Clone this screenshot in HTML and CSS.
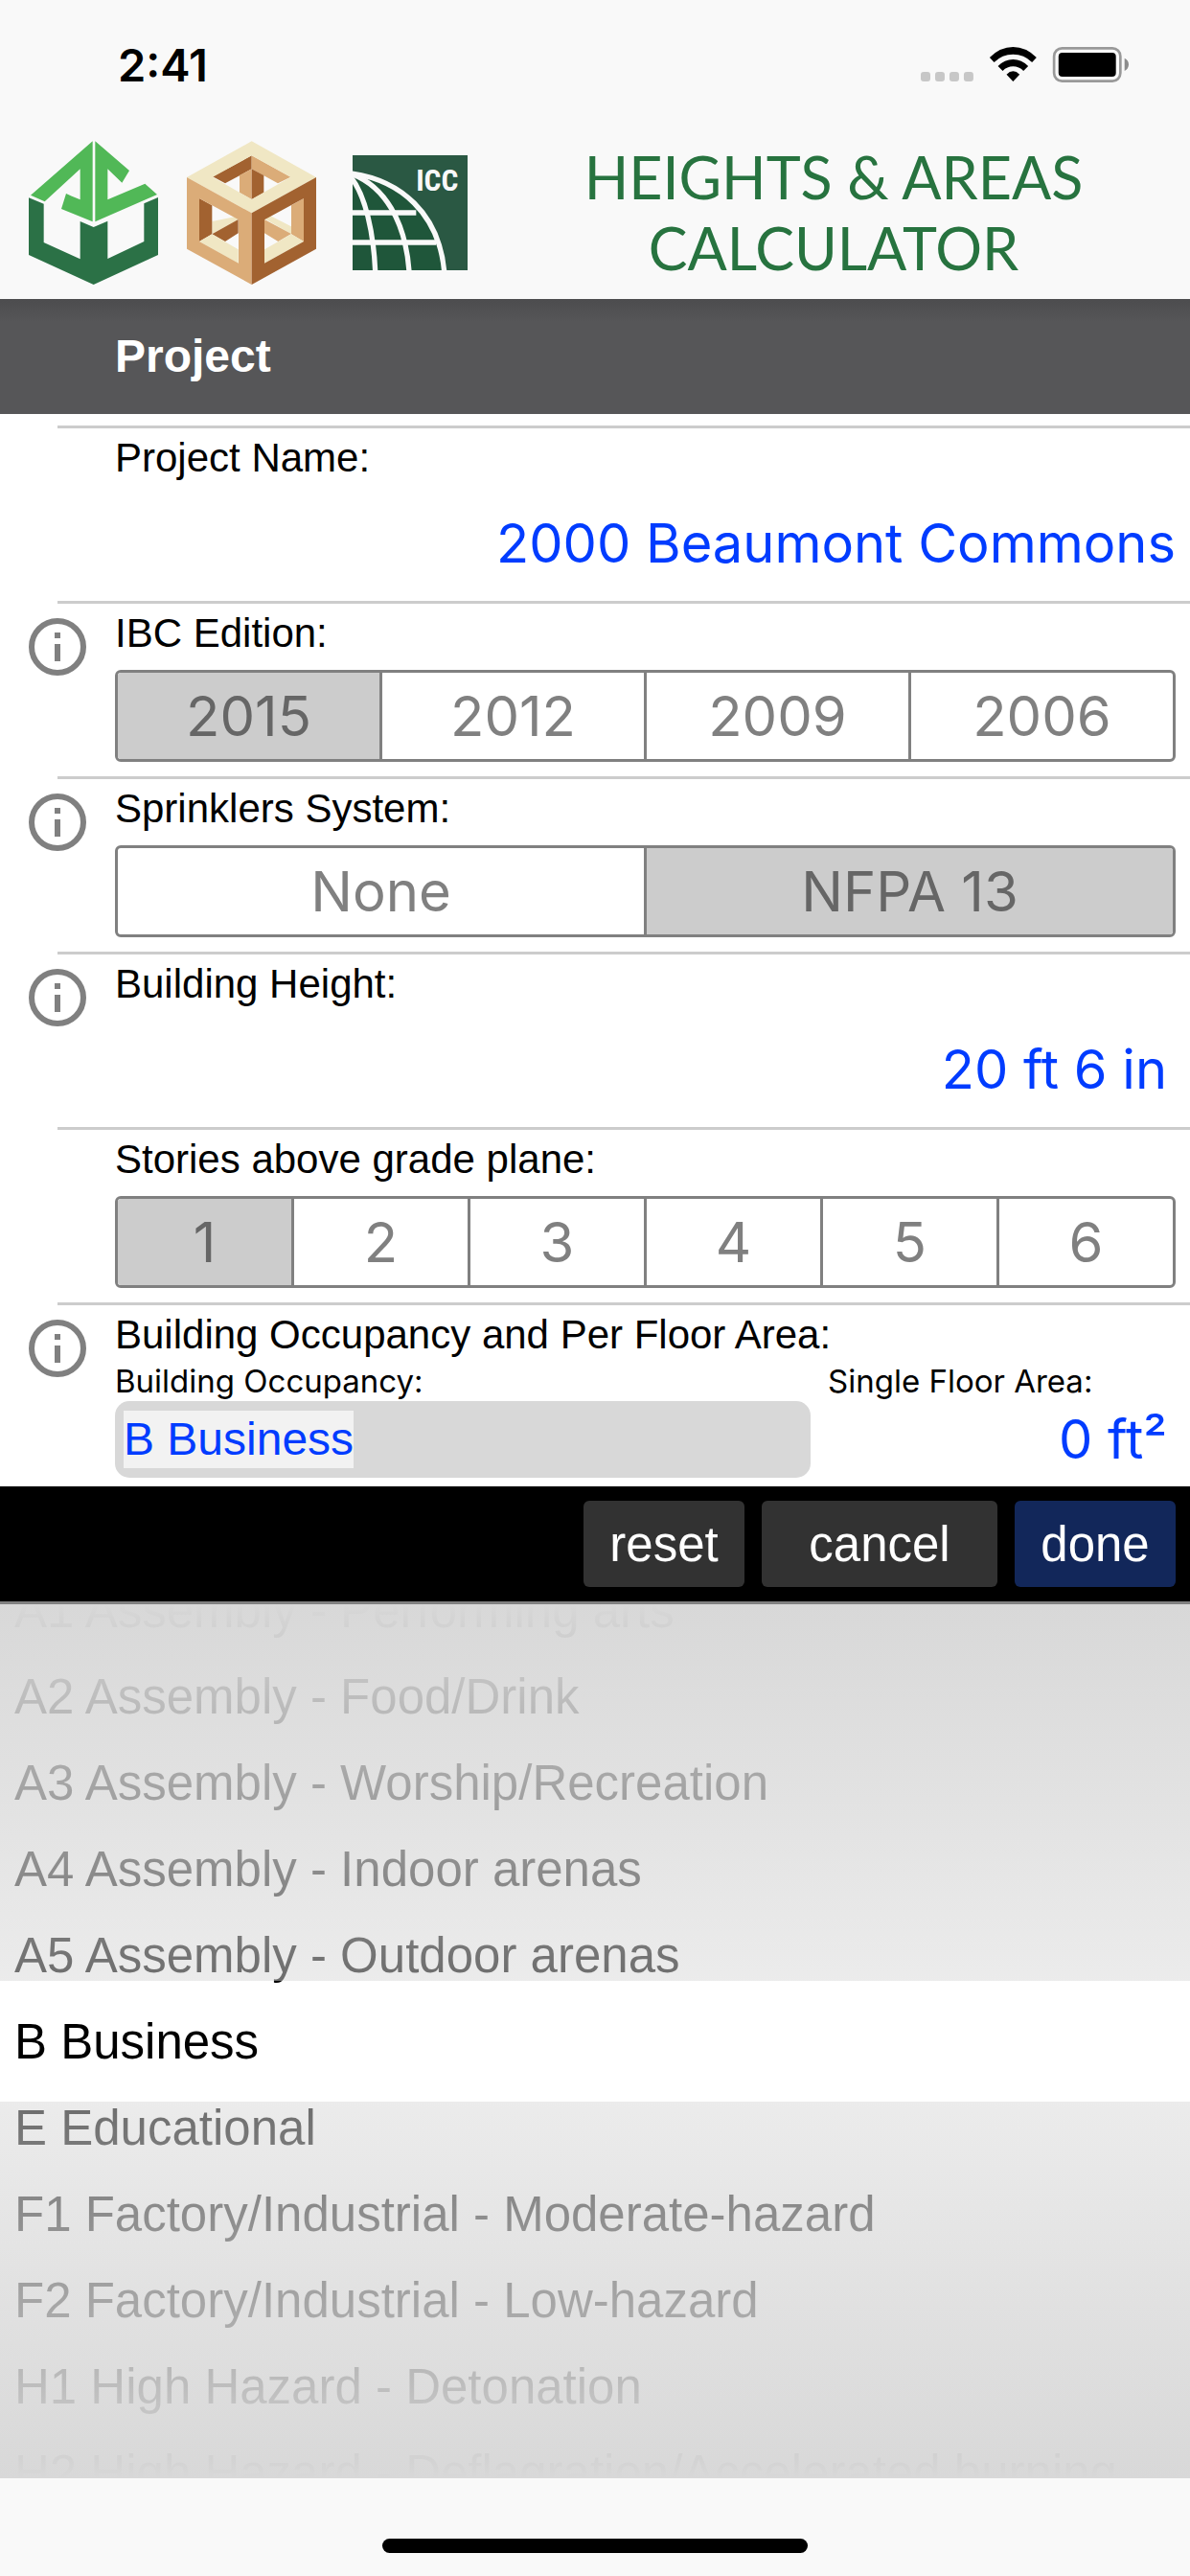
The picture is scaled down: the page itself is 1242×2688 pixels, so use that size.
FILE: index.html
```html
<!DOCTYPE html>
<html lang="en">
<head>
<meta charset="utf-8">
<meta name="viewport" content="width=device-width, initial-scale=1">
<title>Heights &amp; Areas Calculator</title>
<link rel="stylesheet" href="styles.css">
</head>
<body>
<svg class="sprite" aria-hidden="true">
  <symbol id="info" viewBox="0 0 60 60">
    <circle cx="30" cy="30" r="27" fill="none" stroke="#808080" stroke-width="6"/>
    <path d="M27 15h6v6h-6zM27 27h6v18h-6z" fill="#808080"/>
  </symbol>
</svg>

<header class="top">
  <div class="status">
    <time class="clock">2:41</time>
    <svg class="status-icons" viewBox="60 57 652 111" role="img" aria-label="No signal, Wi-Fi on, battery full">
      <g fill="#c7c7c7">
        <rect x="60" y="135" width="30" height="30" rx="9"/>
        <rect x="105" y="135" width="30" height="30" rx="9"/>
        <rect x="150" y="135" width="30" height="30" rx="9"/>
        <rect x="195" y="135" width="30" height="30" rx="9"/>
      </g>
      <path d="M276 90Q309 57 349.500 57T423 90L409 105Q384 80 349.500 80T290 105Z"/>
      <path d="M302 117Q323 96 349.500 96T397 117L382 132Q368 118 349.500 118T317 132Z"/>
      <path d="M329 143Q339 133 349.500 133T370 143L349.500 165Z"/>
      <rect x="478" y="61" width="208" height="103" rx="25" fill="none" stroke="#999" stroke-width="8"/>
      <rect x="492" y="75" width="180" height="75" rx="12"/>
      <path d="M699 92Q712 98 712 112T699 132Z" fill="#8c8c8c"/>
    </svg>
  </div>
  <div class="brand">
    <svg class="logo-cube" viewBox="30 20 405 450" role="img" aria-label="AWC logo">
      <g fill="#51b857">
        <path d="M230 21V273L132 233L147 185L165 193L191 204V108L80 210L36 190Z"/>
        <path d="M238 21L345 113L322 151L277 108V204L394 154L432 188L238 273Z"/>
      </g>
      <path fill="#2b7146" d="M30 198L77 217V338L191 390V272L233 290L277 271V389L391 335V216L435 197V377L233 470L30 377Z"/>
    </svg>
    <svg class="logo-cube" viewBox="30 20 405 450" role="img" aria-label="Wood cube logo">
      <path fill="#f9f9f9" d="M150 150L195 125V182ZM272 128L315 152L272 180Z"/>
      <path fill="#a26230" d="M233 66V108L150 153L111 132Z"/>
      <path fill="#dbac78" d="M233 66L355 133L315 153L233 108ZM195 128L233 108V203L195 182Z"/>
      <path fill="#a26230" d="M233 108L271 128V182L233 203Z"/>
      <path fill="#f0e7c4" d="M109 270L165 240L191 267L109 312ZM276 265L292 250L358 288V312Z"/>
      <path fill="#f9f9f9" d="M109 220L180 258L109 272ZM357 220V288L286 252Z"/>
      <path fill="#a26230" d="M69 200L109 222V312L69 335ZM109 312L191 266V309L150 335Z"/>
      <path fill="#dbac78" d="M396 200V335L357 312V222ZM273 266L357 311L316 335L273 309Z"/>
      <path fill="#f0e7c4" d="M69 335L109 312L191 360V403ZM396 335L357 312L273 360V403Z"/>
      <path fill="#f0e7c4" fill-rule="evenodd" d="M233 21L435 134L233 246L30 134ZM233 66L111 133L233 203L355 133Z"/>
      <path fill="#dbac78" fill-rule="evenodd" d="M30 134L233 246V470L30 358ZM69 200V335L192 403V267Z"/>
      <path fill="#a26230" fill-rule="evenodd" d="M435 134L233 246V470L435 358ZM396 200L273 267V403L396 335Z"/>
    </svg>
    <svg class="logo-icc" viewBox="39 36 360 360" role="img" aria-label="ICC logo">
      <defs><clipPath id="frame"><path d="M39 36h360v360H39z"/></clipPath></defs>
      <path fill="#2a5843" d="M39 36h360v360H39z"/>
      <g clip-path="url(#frame)">
        <path fill="#1f563a" d="M39 92C190 118 310 220 326 396H39Z"/>
        <g fill="none" stroke="#f9f9f9" stroke-width="16">
          <path d="M30 92C190 112 310 220 326 400"/>
          <path d="M30 92C140 130 205 245 216 400"/>
          <path d="M30 100C80 160 105 280 110 400"/>
          <path d="M39 216H238M39 309H300"/>
        </g>
      </g>
      <text class="icc-text" x="370" y="148" text-anchor="end">ICC</text>
    </svg>
    <h1 class="title">HEIGHTS &amp; AREAS<br>CALCULATOR</h1>
  </div>
</header>

<main>
  <h2 class="section">Project</h2>
  <form class="form">
    <div class="row">
      <div class="body">
        <label class="label" for="name">Project Name:</label>
        <input class="value value-name" id="name" type="text" value="2000 Beaumont Commons">
      </div>
    </div>
    <div class="row">
      <button class="info" type="button" aria-label="About IBC edition"><svg><use href="#info"/></svg></button>
      <fieldset class="body">
        <legend class="label">IBC Edition:</legend>
        <div class="segments">
          <label class="segment"><input type="radio" name="ibc" checked>2015</label>
          <label class="segment"><input type="radio" name="ibc">2012</label>
          <label class="segment"><input type="radio" name="ibc">2009</label>
          <label class="segment"><input type="radio" name="ibc">2006</label>
        </div>
      </fieldset>
    </div>
    <div class="row">
      <button class="info" type="button" aria-label="About sprinklers"><svg><use href="#info"/></svg></button>
      <fieldset class="body">
        <legend class="label">Sprinklers System:</legend>
        <div class="segments">
          <label class="segment"><input type="radio" name="sprinklers">None</label>
          <label class="segment"><input type="radio" name="sprinklers" checked>NFPA 13</label>
        </div>
      </fieldset>
    </div>
    <div class="row">
      <button class="info" type="button" aria-label="About building height"><svg><use href="#info"/></svg></button>
      <div class="body">
        <label class="label" for="height">Building Height:</label>
        <input class="value" id="height" type="text" value="20 ft 6 in">
      </div>
    </div>
    <div class="row">
      <fieldset class="body">
        <legend class="label">Stories above grade plane:</legend>
        <div class="segments">
          <label class="segment"><input type="radio" name="stories" checked>1</label>
          <label class="segment"><input type="radio" name="stories">2</label>
          <label class="segment"><input type="radio" name="stories">3</label>
          <label class="segment"><input type="radio" name="stories">4</label>
          <label class="segment"><input type="radio" name="stories">5</label>
          <label class="segment"><input type="radio" name="stories">6</label>
        </div>
      </fieldset>
    </div>
    <div class="row">
      <button class="info" type="button" aria-label="About occupancy and area"><svg><use href="#info"/></svg></button>
      <div class="body">
        <h3 class="label">Building Occupancy and Per Floor Area:</h3>
        <div class="pair">
          <div class="field">
            <label class="sublabel" for="occupancy">Building Occupancy:</label>
            <button class="occupancy" id="occupancy" type="button"><mark>B Business</mark></button>
          </div>
          <div class="field">
            <label class="sublabel" for="area">Single Floor Area:</label>
            <input class="value value-area" id="area" type="text" value="0 ft²">
          </div>
        </div>
      </div>
    </div>
  </form>
</main>

<section class="sheet" aria-label="Choose occupancy">
  <div class="toolbar">
    <button class="tool" type="button">reset</button>
    <button class="tool tool-wide" type="button">cancel</button>
    <button class="tool tool-done" type="button">done</button>
  </div>
  <div class="picker">
    <div class="wheel">
      <label class="option"><input type="radio" name="occ">A1 Assembly - Performing arts</label>
      <label class="option"><input type="radio" name="occ">A2 Assembly - Food/Drink</label>
      <label class="option"><input type="radio" name="occ">A3 Assembly - Worship/Recreation</label>
      <label class="option"><input type="radio" name="occ">A4 Assembly - Indoor arenas</label>
      <label class="option"><input type="radio" name="occ">A5 Assembly - Outdoor arenas</label>
      <label class="option"><input type="radio" name="occ" checked>B Business</label>
      <label class="option"><input type="radio" name="occ">E Educational</label>
      <label class="option"><input type="radio" name="occ">F1 Factory/Industrial - Moderate-hazard</label>
      <label class="option"><input type="radio" name="occ">F2 Factory/Industrial - Low-hazard</label>
      <label class="option"><input type="radio" name="occ">H1 High Hazard - Detonation</label>
      <label class="option"><input type="radio" name="occ">H2 High Hazard - Deflagration/Accelerated burning</label>
    </div>
  </div>
</section>

<footer class="home"><div class="home-bar"></div></footer>
</body>
</html>
```
FILE: styles.css
```css
* {
  box-sizing: border-box;
}

body {
  margin: 0;
  background: #f9f9f9;
  color: #000;
  font-family: "Liberation Sans", Arial, sans-serif;
}

button,
input {
  font: inherit;
  color: inherit;
  margin: 0;
  padding: 0;
  border: 0;
  background: none;
}

.sprite {
  display: none;
}

/* Header */
.status {
  display: flex;
  justify-content: space-between;
  align-items: center;
  height: 135px;
  padding: 0 64px 0 123px;
}

.clock {
  font: 600 47px/1 Inter, sans-serif;
}

.status-icons {
  width: 217px;
  height: 37px;
}

.brand {
  display: flex;
  align-items: center;
  padding: 12px 0 15px 30px;
}

.logo-cube {
  width: 135px;
  height: 150px;
  margin-right: 30px;
}

.logo-icc {
  width: 120px;
  height: 120px;
  margin: 0 10px 0 8px;
}

.icc-text {
  fill: #f9f9f9;
  font: bold 94px "Roboto Condensed", "Liberation Sans Narrow", "Liberation Sans", sans-serif;
}

.title {
  flex: 1;
  margin: 0;
  color: #27733f;
  font: 400 61px/74px Lato, "Gill Sans", sans-serif;
  text-align: center;
}

/* Project form */
.section {
  margin: 0;
  padding: 0 120px;
  background: linear-gradient(#4c4c4e, #565658 24px);
  color: #fff;
  font-size: 48px;
  line-height: 120px;
}

.form {
  padding-top: 12px;
  background: #fff;
}

.row {
  display: grid;
  grid-template-columns: 120px 1fr;
  min-height: 183px;
  padding: 3px 15px 0 0;
  background: linear-gradient(#ccc, #ccc) 60px 0 / 100% 3px no-repeat;
}

.info {
  width: 60px;
  height: 60px;
  margin: 15px 0 0 30px;
}

.info svg {
  display: block;
  width: 60px;
  height: 60px;
}

.body {
  grid-column: 2;
  min-width: 0;
  margin: 0;
  padding: 0;
  border: 0;
}

.label {
  display: block;
  margin: 0;
  padding: 0;
  font-size: 42px;
  font-weight: 400;
  line-height: 62px;
}

.value {
  display: block;
  width: 100%;
  height: 100px;
  margin-top: 8px;
  padding-right: 9px;
  color: #003cff;
  font: 56px/1 Inter, sans-serif;
  text-align: right;
}

.value-name {
  padding-right: 0;
}

.value-area {
  height: 80px;
  margin-top: 6px;
}

.segments {
  display: flex;
  height: 96px;
  margin-top: 7px;
  overflow: hidden;
  border: 3px solid #808080;
  border-radius: 6px;
}

.segment {
  flex: 1;
  color: #808080;
  font: 58px/90px Inter, sans-serif;
  text-align: center;
}

.segment + .segment {
  border-left: 3px solid #808080;
}

.segment:has(:checked) {
  background: #ccc;
  color: #666;
}

.segment input,
.option input {
  position: absolute;
  opacity: 0;
}

.pair {
  display: grid;
  grid-template-columns: 2fr 1fr;
  gap: 18px;
  padding: 2px 0 9px;
}

.field {
  min-width: 0;
}

.sublabel {
  display: block;
  font: 33px/30px Inter, sans-serif;
}

.occupancy {
  display: block;
  width: 100%;
  height: 80px;
  margin-top: 6px;
  padding: 0 9px;
  border-radius: 15px;
  background: #d8d8d8;
  font-size: 48px;
  text-align: left;
}

.occupancy mark {
  display: inline-block;
  background: #f2f2f2;
  color: #003cff;
  line-height: 60px;
}

/* Picker sheet */
.toolbar {
  display: flex;
  justify-content: flex-end;
  gap: 18px;
  padding: 15px;
  background: #000;
}

.tool {
  width: 168px;
  height: 90px;
  border-radius: 6px;
  background: #323232;
  color: #fff;
  font-size: 51px;
}

.tool-wide {
  width: 246px;
}

.tool-done {
  background: #12275a;
}

.picker {
  position: relative;
  display: flex;
  align-items: center;
  height: 915px;
  overflow: hidden;
  border-top: 3px solid #808080;
  background: #fff;
}

.picker::before,
.picker::after {
  content: "";
  position: absolute;
  left: 0;
  right: 0;
  height: 393px;
  pointer-events: none;
}

.picker::before {
  top: 0;
  background: linear-gradient(rgba(216, 216, 216, 1), rgba(216, 216, 216, 0.5));
}

.picker::after {
  bottom: 0;
  background: linear-gradient(rgba(216, 216, 216, 0.5), rgba(216, 216, 216, 1));
}

.wheel {
  padding-top: 2px;
}

.option {
  display: block;
  padding-left: 15px;
  font-size: 51px;
  line-height: 90px;
  white-space: nowrap;
}

.home {
  display: flex;
  justify-content: center;
  padding: 63px 0 24px;
}

.home-bar {
  width: 444px;
  height: 15px;
  border-radius: 8px;
  background: #000;
}
```
